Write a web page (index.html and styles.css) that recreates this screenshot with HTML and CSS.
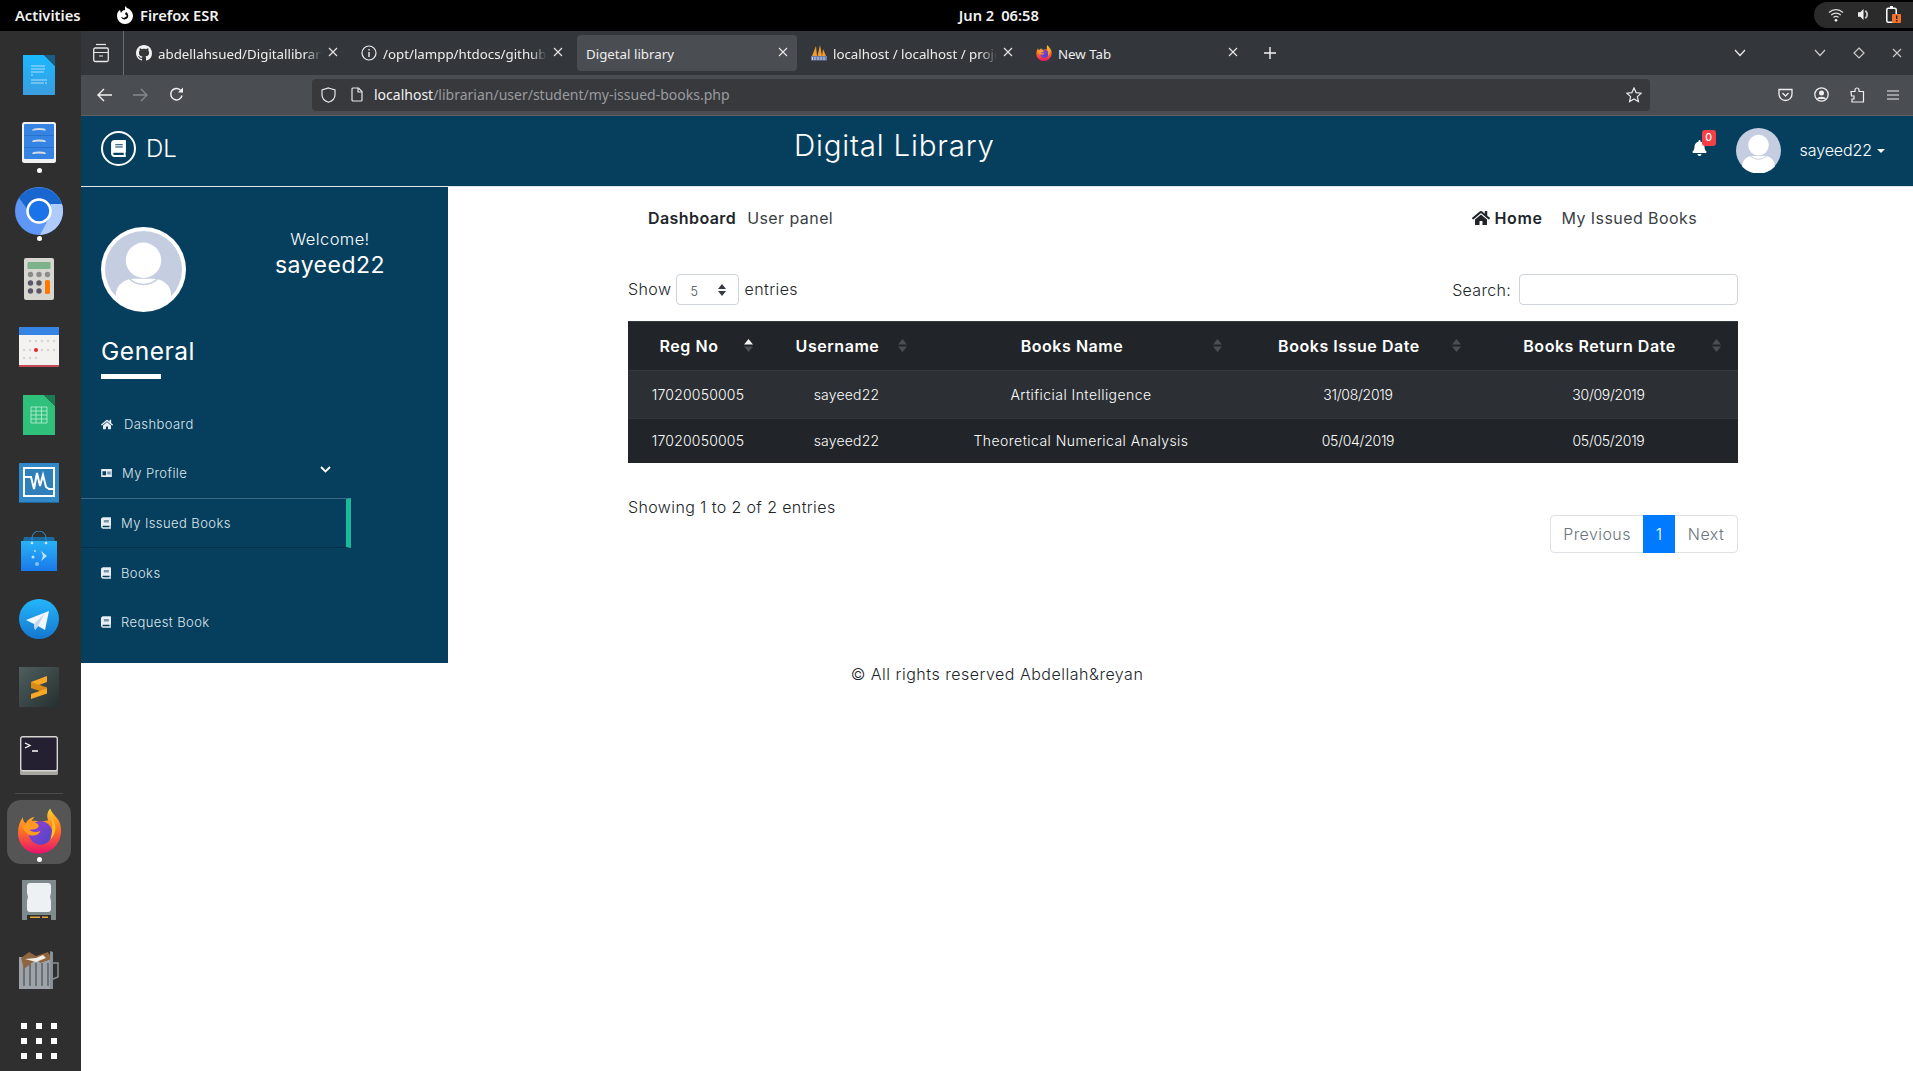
FILE: index.html
```html
<!DOCTYPE html>
<html lang="en">
<head>
<meta charset="utf-8">
<title>Digetal library</title>
<link rel="stylesheet" href="styles.css">
</head>
<body>
<svg class="sprites" aria-hidden="true">
  <defs>
    <symbol id="i-home" viewBox="0 0 576 512"><path fill="currentColor" d="M280.37 148.26L96 300.11V464a16 16 0 0 0 16 16l112.06-.29a16 16 0 0 0 15.92-16V368a16 16 0 0 1 16-16h64a16 16 0 0 1 16 16v95.64a16 16 0 0 0 16 16.05L464 480a16 16 0 0 0 16-16V300L295.67 148.26a12.19 12.19 0 0 0-15.3 0zM571.6 251.47L488 182.56V44.05a12 12 0 0 0-12-12h-56a12 12 0 0 0-12 12v72.61L318.47 43a48 48 0 0 0-61 0L4.34 251.47a12 12 0 0 0-1.6 16.9l25.5 31A12 12 0 0 0 45.15 301l235.22-193.74a12.19 12.19 0 0 1 15.3 0L530.9 301a12 12 0 0 0 16.9-1.6l25.5-31a12 12 0 0 0-1.7-16.93z"/></symbol>
    <symbol id="i-book" viewBox="0 0 448 512"><path fill="currentColor" d="M448 360V24c0-13.3-10.7-24-24-24H96C43 0 0 43 0 96v320c0 53 43 96 96 96h328c13.3 0 24-10.7 24-24v-16c0-7.5-3.5-14.3-8.9-18.7-4.2-15.4-4.2-59.3 0-74.7 5.4-4.3 8.9-11.1 8.9-18.6zM128 134c0-3.3 2.7-6 6-6h212c3.3 0 6 2.7 6 6v20c0 3.3-2.7 6-6 6H134c-3.3 0-6-2.7-6-6v-20zm0 64c0-3.3 2.7-6 6-6h212c3.3 0 6 2.7 6 6v20c0 3.3-2.7 6-6 6H134c-3.3 0-6-2.7-6-6v-20zm253.4 250H96c-17.7 0-32-14.3-32-32 0-17.6 14.4-32 32-32h285.4c-1.9 17.1-1.9 46.9 0 64z"/></symbol>
    <symbol id="i-close" viewBox="0 0 10 10"><path d="M1 1l8 8M9 1l-8 8" fill="none" stroke="currentColor" stroke-width="1.1"/></symbol>
    <symbol id="i-user" viewBox="0 0 100 100"><circle cx="50" cy="50" r="50" fill="#c5cde0"/><circle cx="50" cy="38" r="23" fill="#fff"/><path d="M14 86V84c0-15 12-22 24-22h24c12 0 24 7 24 22v2a50 50 0 0 1-72 0z" fill="#fff"/><path d="M30 60a26 26 0 0 0 40 0" fill="none" stroke="#c5cde0" stroke-width="2"/></symbol>
    <symbol id="i-sort" viewBox="0 0 9 13"><path d="M4.5 0L9 5.5H0z" fill="currentColor"/><path d="M4.5 13L0 7.5h9z" fill="#4b4f54"/></symbol>
    <linearGradient id="ffo" x1="0" y1="0" x2="0" y2="1"><stop offset="0" stop-color="#ffd52e"/><stop offset=".45" stop-color="#ff7a1f"/><stop offset="1" stop-color="#e8116e"/></linearGradient>
    <linearGradient id="ffp" x1="0" y1="0" x2="1" y2="1"><stop offset="0" stop-color="#9b3fd0"/><stop offset="1" stop-color="#4a46c8"/></linearGradient>
    <symbol id="i-firefox" viewBox="0 0 46 46">
      <path d="M23 46C10 46 1 37 1 25c0-6 2-12 5-16 0 3 1 5 3 6 2-4 6-6 9-6-2 2-3 3-3 4 3-1 6 0 8 1l9-2c-2-4-1-9 2-12 1 4 4 6 6 9 4 4 5 9 5 14 0 13-10 23-22 23z" fill="url(#ffo)"/>
      <circle cx="24" cy="25" r="12" fill="url(#ffp)"/>
      <path d="M6 18c4-4 10-5 14-3 2 1 3 3 1 5-3 2-6 1-8 2 3 3 8 2 11 1-2 5-9 6-13 3-3-2-5-5-5-8z" fill="#ff9a22"/>
      <path d="M35 9c3 4 5 9 4 14-1 4-3 7-5 9 2-6 3-15 1-23z" fill="#ffc21f"/>
    </symbol>
  </defs>
</svg>

<header class="system-bar">
  <span class="sys-activities">Activities</span>
  <span class="sys-app">
    <svg class="sys-app-icon" viewBox="0 0 16 18"><path fill="#fff" d="M8 0l2 2c3 1 6 4 6 8a8 8 0 0 1-16 0c0-3 1-5 3-6l1 3c1-2 2-3 4-3zM9 6l-1 2 2 2-3 2-3-1c1 2 3 3 5 2 3-1 3-5 0-7z"/></svg>
    Firefox ESR
  </span>
  <span class="sys-clock"><span>Jun 2</span><span>06:58</span></span>
  <span class="sys-status">
    <svg class="st-wifi" viewBox="0 0 16 14"><path d="M1 4.5a10 10 0 0 1 14 0M3.2 7a7 7 0 0 1 9.6 0M5.4 9.4a4 4 0 0 1 5.2 0" fill="none" stroke="#ddd" stroke-width="1.2"/><circle cx="8" cy="12.2" r="1.3" fill="#fff"/></svg>
    <svg class="st-vol" viewBox="0 0 12 14"><path d="M0 4.5h2.5L6 1v12L2.5 9.5H0z" fill="#eee"/><path d="M8 3a5 5 0 0 1 0 8" fill="none" stroke="#ccc" stroke-width="2"/></svg>
    <svg class="st-bat" viewBox="0 0 15 17"><path d="M4 0h3v2H4z" fill="#fff"/><rect x=".8" y="2.2" width="9.4" height="14" rx="1.5" fill="none" stroke="#fff" stroke-width="1.5"/><rect x="6" y="8" width="9" height="9" rx="1" fill="#f2722b"/><path d="M10 9.5h1.4v3.5H10zM10 14h1.4v1.5H10z" fill="#222"/></svg>
  </span>
</header>

<div class="desktop">
  <nav class="dock">
    <div class="dock-item">
      <svg class="ic-w32" viewBox="0 0 32 40"><defs><linearGradient id="wr" x1="0" y1="0" x2="0" y2="1"><stop offset="0" stop-color="#1bb8ff"/><stop offset="1" stop-color="#3a9de0"/></linearGradient></defs><path d="M0 0h21l11 11v29H0z" fill="url(#wr)"/><path d="M21 0h11v11z" fill="#1d5d85"/><path d="M8 11h14M8 14h14M8 17h13M8 20h2M8 25h16M8 28h13M22 28h2" stroke="#cdeeff" stroke-width=".8"/></svg>
    </div>
    <div class="dock-item has-dot">
      <svg class="ic-files" viewBox="0 0 34 41"><rect width="34" height="41" rx="2.5" fill="#f1f1f1"/><rect x="2" y="2" width="30" height="35" rx="1" fill="#3584e4"/><path d="M2 13.5h30M2 25.5h30" stroke="#2a6cc0" stroke-width=".8"/><path d="M11 8.5c0-2 12-2 12 0M11 20c0-2 12-2 12 0M11 32c0-2 12-2 12 0" stroke="#d9dde3" stroke-width="1.8" fill="none"/></svg>
    </div>
    <div class="dock-item has-dot">
      <svg class="ic-chrome" viewBox="0 0 48 48"><circle cx="24" cy="24" r="24" fill="#5e97f6"/><path d="M4 11A24 24 0 0 1 47 18L24 16 13 23z" fill="#1a66cf"/><path d="M47 17a24 24 0 0 1-22 31l9-17 2-14z" fill="#aecbfa"/><circle cx="24" cy="24" r="11.500" fill="#1a73e8" stroke="#fff" stroke-width="2.500"/></svg>
    </div>
    <div class="dock-item">
      <svg class="ic-calc" viewBox="0 0 30 42"><rect width="30" height="42" rx="2" fill="#d8d6d0"/><rect x="3.500" y="4" width="23" height="7" rx="1" fill="#7cb38a"/><g fill="#8c8c8c"><circle cx="6.500" cy="16.500" r="2.700"/><circle cx="15" cy="16.500" r="2.700"/><circle cx="23.500" cy="16.500" r="2.700"/></g><g fill="#5a5766"><circle cx="6.500" cy="25" r="2.700"/><circle cx="15" cy="25" r="2.700"/><circle cx="6.500" cy="33" r="2.700"/><circle cx="15" cy="33" r="2.700"/></g><rect x="21" y="22" width="5" height="14" rx="1.500" fill="#ff7800"/></svg>
    </div>
    <div class="dock-item">
      <svg class="ic-w40" viewBox="0 0 40 40"><rect width="40" height="40" rx="2" fill="#f4f2f0"/><path d="M0 38h40v1a1 1 0 0 1-1 1H1a1 1 0 0 1-1-1z" fill="#c64a55"/><path d="M0 8V2a2 2 0 0 1 2-2h36a2 2 0 0 1 2 2v6z" fill="#3584e4"/><g fill="#d8d6d4"><circle cx="11" cy="14" r="1.300"/><circle cx="17" cy="14" r="1.300"/><circle cx="23" cy="14" r="1.300"/><circle cx="29" cy="14" r="1.300"/><circle cx="35" cy="14" r="1.300"/><circle cx="5" cy="23" r="1.300"/><circle cx="11" cy="23" r="1.300"/><circle cx="23" cy="23" r="1.300"/><circle cx="29" cy="23" r="1.300"/><circle cx="35" cy="23" r="1.300"/><circle cx="5" cy="31" r="1.300"/><circle cx="11" cy="31" r="1.300"/><circle cx="17" cy="31" r="1.300"/></g><circle cx="17" cy="23" r="2" fill="#e8262f"/></svg>
    </div>
    <div class="dock-item">
      <svg class="ic-w32" viewBox="0 0 32 40"><path d="M0 0h21l11 11v29H0z" fill="#2fc07c"/><path d="M21 0h11v11z" fill="#1d7a52"/><path d="M8 12h16v16H8zM8 16h16M8 20h16M8 24h16M13 12v16M18.500 12v16" fill="none" stroke="#c2f0d8" stroke-width=".8"/></svg>
    </div>
    <div class="dock-item">
      <svg class="ic-w40" viewBox="0 0 40 40"><rect width="40" height="40" fill="#3188c7"/><rect y="39" width="40" height="1" fill="#1f6597"/><path d="M5 5h30v28H5z" fill="#2f7fbb" stroke="#fff" stroke-width="2"/><path d="M5 14h7l3 12 3-16 3 13 3-11 3 12 3 2h5v7" fill="none" stroke="#fff" stroke-width="2"/></svg>
    </div>
    <div class="dock-item">
      <svg class="ic-store" viewBox="0 0 36 40"><defs><linearGradient id="st" x1="0" y1="0" x2="0" y2="1"><stop offset="0" stop-color="#28b2f7"/><stop offset="1" stop-color="#1a78ea"/></linearGradient></defs><path d="M3 6h30l1 4H2z" fill="#1b6aa0"/><rect y="10" width="36" height="30" fill="url(#st)"/><path d="M11 10V7a7 7 0 0 1 14 0v3" fill="none" stroke="#2f8fd6" stroke-width="1"/><circle cx="11" cy="12" r="1.300" fill="#cfe7fb"/><circle cx="25" cy="12" r="1.300" fill="#cfe7fb"/><path d="M20 20l6 5-6 5 2-5z" fill="#bfe3ff"/><circle cx="14" cy="20" r="1" fill="#bfe3ff"/><circle cx="12" cy="26" r="1.500" fill="#bfe3ff"/><circle cx="16" cy="33" r="2" fill="#7ec2f5"/></svg>
    </div>
    <div class="dock-item">
      <svg class="ic-w40" viewBox="0 0 40 40"><defs><linearGradient id="tg" x1="0" y1="0" x2="0" y2="1"><stop offset="0" stop-color="#24b6fb"/><stop offset="1" stop-color="#1577cf"/></linearGradient></defs><circle cx="20" cy="20" r="20" fill="url(#tg)"/><path d="M7 21l23-9-4 19-7-4-3 4-1-6z" fill="#f2f7fc"/><path d="M15 25l11-11-7 13-3 4z" fill="#c4d9ee"/></svg>
    </div>
    <div class="dock-item">
      <svg class="ic-w40" viewBox="0 0 40 40"><defs><linearGradient id="sb" x1="0" y1="0" x2="1" y2="1"><stop offset="0" stop-color="#4f5e5e"/><stop offset="1" stop-color="#262f30"/></linearGradient></defs><rect width="40" height="40" fill="url(#sb)"/><path d="M12 15L28 9v6L12 21z" fill="#f9a825"/><path d="M12 15l16 5.500v6L12 21z" fill="#d98a16"/><path d="M12 27l16-5.500v5L12 32z" fill="#f9a825"/></svg>
    </div>
    <div class="dock-item">
      <svg class="ic-term" viewBox="0 0 38 39"><rect y="33" width="38" height="6" rx="1.500" fill="#a8a6a1"/><rect x=".7" y=".7" width="36.600" height="34" rx="2" fill="#241f31" stroke="#d8d6d2" stroke-width="1.400"/><path d="M5 7l5 2.500L5 12M12 15h6" fill="none" stroke="#fff" stroke-width="1.300"/></svg>
    </div>
    <div class="dock-sep"></div>
    <div class="dock-item dock-active has-dot">
      <svg class="ic-ff"><use href="#i-firefox"/></svg>
    </div>
    <div class="dock-item">
      <svg class="ic-disk" viewBox="0 0 34 40"><rect width="34" height="40" fill="#7f8a8c"/><path d="M5 6q0-3 3-3h18q3 0 3 3v7l-1 4 1 4v8q0 3-3 3H8q-3 0-3-3v-8l1-4-1-4z" fill="#eef1f4"/><rect x="5" y="35" width="24" height="5" fill="#2d2f2f"/><path d="M8 37.200h10M20 37.200h6" stroke="#e8a53c" stroke-width="1.500"/></svg>
    </div>
    <div class="dock-item dock-trash">
      <svg class="ic-trash" viewBox="0 0 40 38"><rect y="6" width="33" height="32" fill="#9da3a9"/><path d="M5 12v23M11 12v23M17 12v23M23 12v23M29 12v23" stroke="#6b7177" stroke-width="2"/><path d="M2 7l8-6 7 4 12-4 4 7-12 4-3-4-13 10z" fill="#8f6540"/><path d="M6 8l11-1 7-3 3 3-10 4z" fill="#f1ede8"/><path d="M31 0l3 1v37h-3z" fill="#8a9096"/><path d="M34 12h5v14l-5 2" fill="none" stroke="#8a9096" stroke-width="1.500"/></svg>
    </div>
    <div class="dock-grid">
      <i></i><i></i><i></i><i></i><i></i><i></i><i></i><i></i><i></i>
    </div>
  </nav>

  <div class="browser">
    <div class="tabbar">
      <div class="tabs-view">
        <svg class="ic-archive" viewBox="0 0 16 20"><path d="M3 1.500h10" stroke="#e8e8e8" stroke-width="1.200"/><rect x=".7" y="5" width="14.600" height="13.500" rx="1.500" fill="none" stroke="#e8e8e8" stroke-width="1.300"/><path d="M1 9.500h14M6 13h4" stroke="#e8e8e8" stroke-width="1.200"/></svg>
      </div>
      <div class="tab">
        <svg class="tab-icon" viewBox="0 0 16 16"><path fill="#f2f2f2" d="M8 0C3.580 0 0 3.580 0 8c0 3.540 2.290 6.530 5.470 7.590.4.070.55-.17.55-.38 0-.19-.01-.82-.01-1.490-2.010.37-2.530-.49-2.690-.94-.09-.23-.48-.94-.82-1.130-.28-.15-.68-.52-.01-.53.63-.01 1.080.58 1.230.82.720 1.210 1.870.87 2.330.66.070-.52.28-.87.51-1.070-1.780-.2-3.640-.89-3.640-3.950 0-.87.31-1.590.82-2.150-.08-.2-.36-1.020.08-2.120 0 0 .67-.21 2.200.82.64-.18 1.320-.27 2-.27.68 0 1.360.09 2 .27 1.530-1.040 2.200-.82 2.200-.82.44 1.100.16 1.920.08 2.120.51.56.82 1.270.82 2.150 0 3.070-1.870 3.750-3.650 3.950.29.25.54.73.54 1.480 0 1.070-.01 1.930-.01 2.200 0 .21.15.46.55.38A8.013 8.013 0 0016 8c0-4.420-3.580-8-8-8z"/></svg>
        <span class="tab-label fade">abdellahsued/Digitallibrary</span>
        <svg class="tab-close"><use href="#i-close"/></svg>
      </div>
      <div class="tab">
        <svg class="tab-icon" viewBox="0 0 16 16"><circle cx="8" cy="8" r="7" fill="none" stroke="#eee" stroke-width="1.200"/><path d="M7.300 7h1.400v5H7.300zM7.300 4h1.400v1.600H7.300z" fill="#eee"/></svg>
        <span class="tab-label fade">/opt/lampp/htdocs/github/Digitallibrary</span>
        <svg class="tab-close"><use href="#i-close"/></svg>
      </div>
      <div class="tab tab-current">
        <span class="tab-label">Digetal library</span>
        <svg class="tab-close"><use href="#i-close"/></svg>
      </div>
      <div class="tab">
        <svg class="tab-icon" viewBox="0 0 16 16"><path d="M1 11L5 1l1 10zM6.500 11L9 0l2 11zM11 11l1-7 3 7z" fill="#f29b30"/><rect y="11" width="16" height="4.500" fill="#6c7ea8"/><path d="M1.500 12v3M4 12v3M7 12v3M10 12v3M13 12v3" stroke="#dfe5f2" stroke-width=".8"/></svg>
        <span class="tab-label fade">localhost / localhost / project</span>
        <svg class="tab-close"><use href="#i-close"/></svg>
      </div>
      <div class="tab">
        <svg class="tab-icon"><use href="#i-firefox"/></svg>
        <span class="tab-label">New Tab</span>
        <svg class="tab-close"><use href="#i-close"/></svg>
      </div>
      <svg class="tab-plus" viewBox="0 0 14 14"><path d="M7 1v12M1 7h12" stroke="#f2f2f2" stroke-width="1.400"/></svg>
      <svg class="tab-list" viewBox="0 0 12 8"><path d="M1 1l5 5.500L11 1" fill="none" stroke="#eee" stroke-width="1.200"/></svg>
      <svg class="win-min" viewBox="0 0 12 8"><path d="M1 1l5 5.500L11 1" fill="none" stroke="#ccc" stroke-width="1.200"/></svg>
      <svg class="win-max" viewBox="0 0 12 12"><path d="M6 1l5 5-5 5-5-5z" fill="none" stroke="#ccc" stroke-width="1.200"/></svg>
      <svg class="win-close" viewBox="0 0 10 10"><use href="#i-close"/></svg>
    </div>

    <div class="toolbar">
      <svg class="tb-back" viewBox="0 0 15 14"><path d="M7 1L1 7l6 6M1 7h14" fill="none" stroke="#f2f2f2" stroke-width="1.400"/></svg>
      <svg class="tb-fwd" viewBox="0 0 15 14"><path d="M8 1l6 6-6 6M14 7H0" fill="none" stroke="#85888c" stroke-width="1.400"/></svg>
      <svg class="tb-reload" viewBox="0 0 15 15"><path d="M13 8.500A5.700 5.700 0 1 1 11.500 3.200L13.500 5" fill="none" stroke="#f2f2f2" stroke-width="1.400"/><path d="M14 .5v5H9z" fill="#f2f2f2"/></svg>
      <div class="urlbar">
        <svg class="ub-shield" viewBox="0 0 15 16"><path d="M7.500 1L14 3v5c0 4-3 6-6.500 7.300C4 14 1 12 1 8V3z" fill="none" stroke="#e8e8e8" stroke-width="1.200"/></svg>
        <svg class="ub-page" viewBox="0 0 12 15"><path d="M1 2a1 1 0 0 1 1-1h5.500L11 4.500V13a1 1 0 0 1-1 1H2a1 1 0 0 1-1-1z" fill="none" stroke="#e8e8e8" stroke-width="1.200"/><path d="M7 1v4h4" fill="none" stroke="#e8e8e8" stroke-width="1.200"/></svg>
        <span class="url-text"><span class="url-host">localhost</span>/librarian/user/student/my-issued-books.php</span>
        <svg class="ub-star" viewBox="0 0 16 16"><path d="M8 1l2.100 4.600 5 .6-3.700 3.400 1 5L8 11.900 3.600 14.600l1-5L.9 6.200l5-.6z" fill="none" stroke="#e8e8e8" stroke-width="1.200"/></svg>
      </div>
      <svg class="tb-pocket" viewBox="0 0 15 14"><path d="M1 1.500h13V6a6.500 6.500 0 0 1-13 0z" fill="none" stroke="#eee" stroke-width="1.300"/><path d="M4.500 5l3 3 3-3" fill="none" stroke="#eee" stroke-width="1.300"/></svg>
      <svg class="tb-account" viewBox="0 0 15 15"><circle cx="7.500" cy="7.500" r="6.700" fill="none" stroke="#eee" stroke-width="1.300"/><circle cx="7.500" cy="6" r="2.500" fill="#eee"/><path d="M3 12c1-3 8-3 9 0z" fill="#eee"/></svg>
      <svg class="tb-ext" viewBox="0 0 15 16"><path d="M1 4.500h4V3a2 2 0 0 1 4 0v1.500h4.500V15H2v-3h2v-3H1.500z" fill="none" stroke="#eee" stroke-width="1.200"/></svg>
      <svg class="tb-menu" viewBox="0 0 12 10"><path d="M0 1h12M0 5h12M0 9h12" stroke="#eee" stroke-width="1.200"/></svg>
    </div>

    <div class="page">
      <header class="site-header">
        <div class="brand">
          <span class="brand-mark"><svg class="brand-book"><use href="#i-book"/></svg></span>
          <span class="brand-name">DL</span>
        </div>
        <h1 class="site-title">Digital Library</h1>
        <div class="header-user">
          <span class="bell">
            <svg class="bell-icon" viewBox="0 0 448 512"><path fill="#fff" d="M224 512c35.320 0 63.970-28.650 63.970-64H160.030c0 35.350 28.650 64 63.970 64zm215.390-149.710c-19.320-20.760-55.470-51.990-55.470-154.290 0-77.700-54.480-139.900-127.940-155.160V32c0-17.670-14.320-32-31.980-32s-31.980 14.330-31.980 32v20.840C118.560 68.100 64.080 130.300 64.080 208c0 102.300-36.150 133.530-55.470 154.290-6 6.450-8.660 14.160-8.610 21.710.11 16.400 12.980 32 32.100 32h383.800c19.120 0 32-15.600 32.100-32 .05-7.550-2.610-15.270-8.610-21.710z"/></svg>
            <span class="bell-badge">0</span>
          </span>
          <svg class="header-avatar"><use href="#i-user"/></svg>
          <span class="header-name">sayeed22</span>
          <span class="header-caret"></span>
        </div>
      </header>

      <div class="page-body">
        <aside class="sidebar">
          <div class="profile">
            <span class="profile-pic"><svg class="profile-svg"><use href="#i-user"/></svg></span>
            <div class="profile-text">
              <div class="welcome">Welcome!</div>
              <div class="profile-name">sayeed22</div>
            </div>
          </div>
          <h3 class="side-title">General</h3>
          <ul class="side-menu">
            <li class="menu-row row-dash"><svg class="mi mi-home"><use href="#i-home"/></svg><span>Dashboard</span></li>
            <li class="menu-row row-profile">
              <svg class="mi mi-card" viewBox="0 0 12 9"><path fill="currentColor" d="M0 0h12v9H0zM1.500 2.500v4.500h4V2.500zM6.800 3v1h4V3zM6.800 5v1h4V5z"/></svg>
              <span>My Profile</span>
              <svg class="menu-chev" viewBox="0 0 11 7"><path d="M1 1l4.500 4.500L10 1" fill="none" stroke="#fff" stroke-width="1.800"/></svg>
            </li>
            <li class="menu-row row-current"><svg class="mi mi-book"><use href="#i-book"/></svg><span>My Issued Books</span></li>
            <li class="menu-row row-book"><svg class="mi mi-book"><use href="#i-book"/></svg><span>Books</span></li>
            <li class="menu-row row-book"><svg class="mi mi-book"><use href="#i-book"/></svg><span>Request Book</span></li>
          </ul>
        </aside>

        <main class="content">
          <div class="crumbs">
            <div class="crumbs-left"><strong>Dashboard</strong><span>User panel</span></div>
            <div class="crumbs-right"><strong class="crumb-home"><svg class="crumb-icon"><use href="#i-home"/></svg>Home</strong><span>My Issued Books</span></div>
          </div>
          <div class="dt-top">
            <div class="dt-length">
              <span class="dt-word">Show</span>
              <span class="dt-select">5<svg class="dt-select-arrows" viewBox="0 0 8 12"><path d="M4 0l4 5H0zM4 12L0 7h8z" fill="#343a40"/></svg></span>
              <span class="dt-word">entries</span>
            </div>
            <label class="dt-search"><span>Search:</span><input class="dt-input" type="text"></label>
          </div>
          <table class="dt-table">
            <colgroup><col class="c1"><col class="c2"><col class="c3"><col class="c4"><col class="c5"></colgroup>
            <thead>
              <tr>
                <th>Reg No<svg class="sort sort-on"><use href="#i-sort"/></svg></th>
                <th>Username<svg class="sort sort-b"><use href="#i-sort"/></svg></th>
                <th>Books Name<svg class="sort sort-n"><use href="#i-sort"/></svg></th>
                <th>Books Issue Date<svg class="sort sort-b"><use href="#i-sort"/></svg></th>
                <th>Books Return Date<svg class="sort"><use href="#i-sort"/></svg></th>
              </tr>
            </thead>
            <tbody>
              <tr class="row-odd"><td>17020050005</td><td>sayeed22</td><td>Artificial Intelligence</td><td>31/08/2019</td><td>30/09/2019</td></tr>
              <tr class="row-even"><td>17020050005</td><td>sayeed22</td><td>Theoretical Numerical Analysis</td><td>05/04/2019</td><td>05/05/2019</td></tr>
            </tbody>
          </table>
          <div class="dt-bottom">
            <div class="dt-info">Showing 1 to 2 of 2 entries</div>
            <div class="pager">
              <span class="pg pg-prev">Previous</span>
              <span class="pg pg-on">1</span>
              <span class="pg pg-next">Next</span>
            </div>
          </div>
        </main>
      </div>
      <footer class="site-footer">© All rights reserved Abdellah&amp;reyan</footer>
    </div>
  </div>
</div>
</body>
</html>
```
FILE: styles.css
```css
* { box-sizing: border-box; }
html, body { margin: 0; padding: 0; height: 100%; }
body {
  width: 1913px;
  height: 1071px;
  overflow: hidden;
  background: #fff;
  font-family: "Inter", "Liberation Sans", sans-serif;
  color: #212529;
  display: flex;
  flex-direction: column;
}
.sprites { width: 0; height: 0; position: absolute; }
svg { display: block; flex: none; }
ul { list-style: none; margin: 0; padding: 0; }
h1, h3 { margin: 0; font-weight: 400; }

/* system bar */
.system-bar {
  height: 31px;
  flex: none;
  background: #000;
  color: #f2f2f2;
  display: flex;
  align-items: center;
  padding-bottom: 2px;
  font-family: "Noto Sans", sans-serif;
  font-weight: 600;
  font-size: 14.700px;
}
.sys-activities { margin-left: 15px; width: 102px; }
.sys-app { display: flex; align-items: center; gap: 7px; }
.sys-app-icon { width: 16px; height: 18px; }
.sys-clock { margin-left: 740px; display: flex; gap: 7px; }
.sys-status {
  margin-left: auto;
  width: 99px;
  height: 26px;
  background: #2b2b2b;
  border-radius: 13px 0 0 13px;
  display: flex;
  align-items: center;
}
.st-wifi { width: 16px; height: 14px; margin-left: 14px; }
.st-vol { width: 11px; height: 13px; margin-left: 14px; }
.st-bat { width: 15px; height: 17px; margin-left: 17px; }

.desktop { flex: 1; display: flex; min-height: 0; }

/* dock */
.dock {
  width: 81px;
  flex: none;
  background: #2f2f2f;
  padding: 10px 3px 0 0;
  display: flex;
  flex-direction: column;
  align-items: center;
}
.dock-item {
  width: 64px;
  height: 68px;
  flex: none;
  display: flex;
  align-items: center;
  justify-content: center;
  position: relative;
}
.has-dot::after {
  content: "";
  position: absolute;
  left: 29.500px;
  bottom: 4px;
  width: 5px;
  height: 5px;
  border-radius: 50%;
  background: #fff;
}
.dock-sep { width: 48px; height: 1px; background: #4a4a4a; margin: 4px 0 6px; flex: none; }
.dock-active { height: 64px; margin-bottom: 2px; background: #555; border-radius: 14px; }
.dock-active::after { bottom: 2px; }
.dock-trash { margin-top: 2px; }
.ic-w32 { width: 32px; height: 40px; }
.ic-w40 { width: 40px; height: 40px; }
.ic-files { width: 34px; height: 41px; margin-top: -1px; }
.ic-chrome { width: 48px; height: 48px; }
.ic-calc { width: 30px; height: 42px; }
.ic-store { width: 36px; height: 40px; }
.ic-term { width: 38px; height: 39px; }
.ic-ff { width: 45px; height: 46px; margin-top: -2px; }
.ic-disk { width: 34px; height: 40px; }
.ic-trash { width: 40px; height: 38px; }
.dock-grid {
  display: grid;
  grid-template-columns: repeat(3, 6px);
  gap: 9px;
  margin-top: 19px;
}
.dock-grid i { width: 6px; height: 6px; background: #fff; }

/* browser */
.browser { flex: 1; min-width: 0; display: flex; flex-direction: column; }
.tabbar {
  height: 44px;
  flex: none;
  background: #33373b;
  display: flex;
  align-items: center;
  color: #eee;
  font-family: "Noto Sans", sans-serif;
  font-size: 13.300px;
}
.tabs-view {
  width: 43px;
  height: 44px;
  border-right: 1px solid #6a6d70;
  display: flex;
  align-items: center;
  padding-left: 12px;
}
.ic-archive { width: 16px; height: 20px; }
.tab {
  width: 225px;
  height: 36px;
  padding: 0 11px 0 12px;
  flex: none;
  display: flex;
  align-items: center;
  gap: 6px;
  position: relative;
  z-index: 0;
}
.tab-current::before {
  content: "";
  position: absolute;
  inset: 0 2px 0 3px;
  background: #4a4d52;
  border-radius: 4px;
  z-index: -1;
}
.tab-icon { width: 16px; height: 16px; }
.tab-label { flex: 1; min-width: 0; white-space: nowrap; overflow: hidden; margin-top: 1px; }
.fade { -webkit-mask-image: linear-gradient(90deg, #000 90%, transparent); mask-image: linear-gradient(90deg, #000 90%, transparent); }
.tab-close { width: 10px; height: 10px; color: #e8e8e8; margin-top: -2px; }
.tab-plus { width: 14px; height: 14px; margin-left: 14px; }
.tab-list { width: 12px; height: 8px; margin-left: 457px; }
.win-min { width: 12px; height: 8px; margin-left: 68px; }
.win-max { width: 12px; height: 12px; margin-left: 27px; }
.win-close { width: 10px; height: 10px; margin-left: 27px; color: #ccc; }

.toolbar {
  height: 41px;
  flex: none;
  background: #4a4d52;
  border-bottom: 1px solid #5d6063;
  display: flex;
  align-items: center;
  padding-bottom: 1px;
}
.tb-back { width: 15px; height: 14px; margin-left: 16px; }
.tb-fwd { width: 15px; height: 14px; margin-left: 21px; }
.tb-reload { width: 15px; height: 15px; margin-left: 21px; }
.urlbar {
  width: 1338px;
  height: 32px;
  background: #38393d;
  border-radius: 4px;
  display: flex;
  align-items: center;
  margin-left: 128px;
  color: #9a9c9f;
  font-family: "Noto Sans", sans-serif;
  font-size: 14px;
}
.ub-shield { width: 15px; height: 16px; margin-left: 9px; }
.ub-page { width: 12px; height: 15px; margin-left: 15px; }
.url-text { margin-left: 11px; margin-top: -1px; }
.url-host { color: #f2f2f2; }
.ub-star { width: 16px; height: 16px; margin-left: auto; margin-right: 8px; }
.tb-pocket { width: 15px; height: 14px; margin-left: 128px; }
.tb-account { width: 15px; height: 15px; margin-left: 21px; }
.tb-ext { width: 15px; height: 16px; margin-left: 21px; }
.tb-menu { width: 12px; height: 10px; margin-left: 22px; }

/* page */
.page { flex: 1; min-height: 0; background: #fff; }
.site-header {
  height: 71px;
  background: #063f5e;
  border-bottom: 1px solid #dfe6ea;
  color: #fff;
  display: flex;
  align-items: center;
  padding-left: 20px;
}
.brand { width: 693px; display: flex; align-items: center; gap: 10px; margin-top: -6px; }
.brand-mark {
  width: 35px;
  height: 35px;
  border: 2px solid #fff;
  border-radius: 50%;
  display: flex;
  align-items: center;
  justify-content: center;
}
.brand-book { width: 15px; height: 17px; color: #fff; }
.brand-name { font-size: 24px; font-weight: 300; }
.site-title { font-size: 29.500px; font-weight: 300; letter-spacing: .8px; margin-top: -13px; white-space: nowrap; }
.header-user { margin-left: auto; display: flex; align-items: center; }
.bell { position: relative; width: 15px; height: 16px; margin-top: -6px; margin-right: 29px; }
.bell-icon { width: 15px; height: 16px; }
.bell-badge {
  position: absolute;
  left: 10px;
  top: -10px;
  width: 14px;
  height: 16px;
  background: #f44046;
  border-radius: 3px;
  font-size: 10.500px;
  font-weight: 500;
  line-height: 16px;
  text-align: center;
  color: #fff;
}
.header-avatar { width: 45px; height: 45px; margin-right: 19px; margin-top: -2px; }
.header-name { font-size: 16px; font-weight: 300; letter-spacing: -.1px; margin-top: -3px; }
.header-caret {
  width: 0;
  height: 0;
  border-left: 4px solid transparent;
  border-right: 4px solid transparent;
  border-top: 4px solid #fff;
  margin-left: 5px;
  margin-right: 28px;
}

.page-body { display: flex; height: 476px; }
.sidebar { width: 367px; flex: none; background: #063f5e; color: #fff; }
.profile { display: flex; padding: 40px 0 0 20px; height: 147px; }
.profile-pic { width: 85px; height: 85px; flex: none; border-radius: 50%; background: #fff; padding: 4px; }
.profile-svg { width: 77px; height: 77px; }
.profile-text { flex: 1; text-align: center; padding: 2px 0 0 26px; }
.welcome { font-size: 16.500px; font-weight: 300; letter-spacing: .4px; line-height: 20px; }
.profile-name { font-size: 23px; font-weight: 400; letter-spacing: .5px; line-height: 30px; margin-top: 1px; }
.side-title { font-size: 24.500px; font-weight: 400; letter-spacing: .55px; line-height: 32px; margin: 1px 0 0 20px; }
.side-title::after { content: ""; display: block; width: 60px; height: 5px; background: #fff; margin-top: 7px; }
.side-menu { margin-top: 21px; color: #dfe6ea; font-size: 13px; font-weight: 300; letter-spacing: .42px; }
.menu-row { display: flex; align-items: center; padding-left: 20px; position: relative; }
.row-dash { height: 48px; gap: 11px; }
.row-profile { height: 50px; gap: 10px; }
.row-current {
  width: 270px;
  gap: 10px;
  border-top: 1px solid #3a6a84;
  border-bottom: 1px solid #042f47;
  border-right: 5px solid #1abb9c;
  height: 50px;
}
.row-book { gap: 10px; height: 49px; }
.mi { color: #e8eef1; }
.mi-home { width: 12px; height: 11px; }
.mi-card { width: 11px; height: 8px; }
.mi-book { width: 10px; height: 12px; }
.menu-chev { position: absolute; left: 239px; top: 18px; width: 11px; height: 7px; }

.content { flex: 1; min-width: 0; padding: 0 175px 0 180px; }
.crumbs { display: flex; height: 87px; padding: 19px 41px 0 20px; justify-content: space-between; align-items: flex-start; font-size: 16px; letter-spacing: .42px; line-height: 24px; color: #3a3f44; }
.crumbs-left { display: flex; gap: 11px; }
.crumbs-right { display: flex; gap: 19px; }
.crumbs strong { font-weight: 600; color: #212529; }
.crumb-home { display: flex; align-items: center; gap: 5px; letter-spacing: .6px; }
.crumb-icon { width: 18px; height: 16px; }
.dt-top { display: flex; justify-content: space-between; height: 47px; font-size: 16px; letter-spacing: .42px; font-weight: 300; color: #212529; }
.dt-length { display: flex; gap: 5px; height: 31px; align-items: center; }
.dt-word { margin-top: -2px; }
.dt-select {
  width: 63px;
  height: 31px;
  border: 1px solid #ced4da;
  border-radius: 4px;
  display: flex;
  align-items: center;
  justify-content: space-between;
  padding: 3px 12px 0 13px;
  font-size: 12.500px;
  color: #495057;
}
.dt-select-arrows { width: 8px; height: 12px; margin-top: -2px; }
.dt-search { display: flex; align-items: center; gap: 8px; height: 31px; letter-spacing: .3px; }
.dt-input { width: 219px; height: 31px; border: 1px solid #ced4da; border-radius: 4px; padding: 0; background: #fff; }

.dt-table { width: 1110px; border-collapse: collapse; table-layout: fixed; color: #fff; background: #212529; }
.c1 { width: 140px; }
.c2 { width: 157px; }
.c3 { width: 312px; }
.c4 { width: 242px; }
.c5 { width: 259px; }
.dt-table th {
  height: 49px;
  padding: 0 30px 0 12px;
  font-size: 16px;
  font-weight: 600;
  letter-spacing: .55px;
  text-align: center;
  position: relative;
  white-space: nowrap;
  border-top: 1px solid #32383e;
  border-bottom: 1px solid #32383e;
}
.dt-table td {
  text-align: center;
  padding: 0;
  font-size: 14px;
  font-weight: 300;
  letter-spacing: .2px;
  border-top: 1px solid #32383e;
  white-space: nowrap;
}
.dt-table td:nth-child(3) { letter-spacing: .45px; }
.dt-table td:nth-child(n+4) { letter-spacing: -.28px; }
.row-odd { height: 48px; background: #2c3034; }
.row-even { height: 44px; background: #212529; }
.sort { position: absolute; right: 17px; top: 17px; width: 9px; height: 13px; color: #4b4f54; }
.sort-b { right: 18px; }
.sort-n { right: 15px; }
.sort-on { color: #f2f2f2; right: 15px; }

.dt-bottom { display: flex; justify-content: space-between; padding-top: 32px; }
.dt-info { font-size: 16px; font-weight: 300; letter-spacing: .38px; line-height: 24px; color: #212529; }
.pager {
  display: flex;
  height: 38px;
  margin-top: 20px;
  font-size: 16px;
  font-weight: 300;
  letter-spacing: .42px;
  color: #6c757d;
  border: 1px solid #dee2e6;
  border-radius: 4px;
}
.pg { display: flex; align-items: center; justify-content: center; height: 36px; }
.pg-prev { width: 92px; }
.pg-on { width: 32px; height: 38px; margin: -1px 0; background: #007bff; color: #fff; }
.pg-next { width: 62px; }

.site-footer { text-align: center; line-height: 22px; font-size: 16px; font-weight: 300; letter-spacing: .5px; color: #212529; }
```
